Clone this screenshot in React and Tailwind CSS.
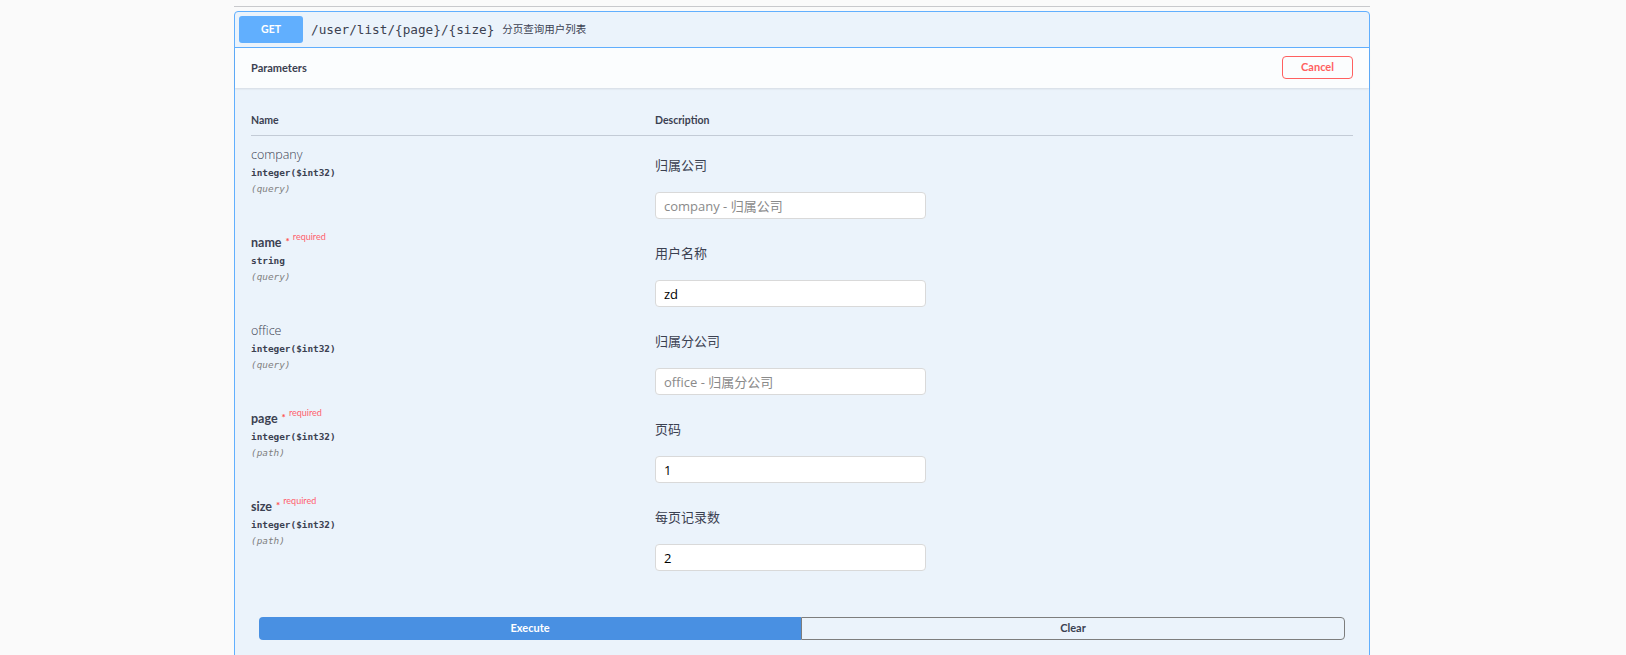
const params = [
  { name: "company", type: "integer($int32)", loc: "(query)", desc: "归属公司", placeholder: "company - 归属公司", value: "" },
  { name: "name", required: true, type: "string", loc: "(query)", desc: "用户名称", placeholder: "name - 用户名称", value: "zd" },
  { name: "office", type: "integer($int32)", loc: "(query)", desc: "归属分公司", placeholder: "office - 归属分公司", value: "" },
  { name: "page", required: true, type: "integer($int32)", loc: "(path)", desc: "页码", placeholder: "page - 页码", value: "1" },
  { name: "size", required: true, type: "integer($int32)", loc: "(path)", desc: "每页记录数", placeholder: "size - 每页记录数", value: "2" },
];

const label = "font-['Lato','Open_Sans',sans-serif]";
const mono = "font-['DejaVu_Sans_Mono','Liberation_Mono',monospace]";
const cjk = "font-['Open_Sans','Noto_Sans_CJK_SC',sans-serif]";

function ParamRow({ p }) {
  return (
    <div className="flex h-[88px]">
      {/* name column */}
      <div className="w-[404px] shrink-0 pt-[11px]">
        {p.required ? (
          <div className={`${label} flex items-start leading-[16px] text-[12.5px] font-bold text-[#3b4151]`}>
            <span>{p.name}</span>
            <span className="ml-[4px] -mt-[2px] text-[10px] text-[#ff4f4f]">*</span>
            <span className="ml-[3px] -mt-[6px] text-[9px] font-normal text-[#ff5f6d]">required</span>
          </div>
        ) : (
          <div className={`${cjk} leading-[16px] text-[12.5px] font-light text-[#3b4151]`}>{p.name}</div>
        )}
        <div className={`${mono} mt-[2px] leading-[16px] text-[9.4px] font-bold text-[#3b4151]`}>{p.type}</div>
        <div className={`${mono} leading-[16px] text-[9.4px] italic text-[#808080]`}>{p.loc}</div>
      </div>
      {/* description column */}
      <div className="flex-1 pt-[21px]">
        <div className={`${cjk} leading-[16px] text-[13px] text-[#3b4151]`}>{p.desc}</div>
        <input
          className={`${cjk} mt-[19px] block h-[27px] w-[271px] rounded-[4px] border border-[#d9d9d9] bg-white px-[8px] text-[13px] text-black outline-none placeholder:text-[#8a8a8a]`}
          placeholder={p.placeholder}
          defaultValue={p.value}
        />
      </div>
    </div>
  );
}

export default function App() {
  return (
    <div className="h-[655px] w-[1626px] overflow-hidden bg-[#fafafa] pt-[6px]">
      <div className="ml-[234px] w-[1136px]">
        <div className="h-px bg-[#c8c9cc]" />

        <div className="mt-[4px] h-[700px] rounded-[4px] border border-[#61affe] bg-[#ebf3fb]">
          {/* summary */}
          <div className="flex h-[36px] items-center border-b border-[#61affe] p-[4px]">
            <div className={`${label} flex h-[27px] w-[64px] items-center justify-center rounded-[3px] bg-[#61affe] text-[10.5px] font-bold text-white`}>
              GET
            </div>
            <span className={`${mono} ml-[8px] text-[12.7px] text-[#3b4151]`}>/user/list/{"{page}"}/{"{size}"}</span>
            <span className={`${cjk} ml-[8px] text-[10.5px] text-[#3b4151]`}>分页查询用户列表</span>
          </div>

          {/* parameters bar */}
          <div className="flex h-[40px] items-center justify-between bg-white/80 px-[16px] shadow-[0_1px_2px_rgba(0,0,0,0.1)]">
            <span className={`${label} text-[11px] font-bold text-[#3b4151]`}>Parameters</span>
            <button className={`${label} -mt-[2px] h-[23px] w-[71px] rounded-[4px] border border-[#ff6060] bg-transparent text-[11px] font-bold text-[#ff6060]`}>
              Cancel
            </button>
          </div>

          {/* table */}
          <div className="px-[16px]">
            <div className={`${label} flex border-b border-[#c3cbd6] pt-[25px] pb-[8px] leading-[14px] text-[10.5px] font-bold text-[#3b4151]`}>
              <div className="w-[404px] shrink-0">Name</div>
              <div>Description</div>
            </div>
            {params.map((p) => (
              <ParamRow key={p.name} p={p} />
            ))}
          </div>

          {/* actions */}
          <div className="mt-[41px] flex px-[24px]">
            <button className={`${label} h-[23px] flex-1 rounded-l-[4px] bg-[#4990e2] text-[11px] font-bold text-white`}>Execute</button>
            <button className={`${label} h-[23px] flex-1 rounded-r-[4px] border border-[#7d7d7d] bg-transparent text-[11px] font-bold text-[#3b4151]`}>Clear</button>
          </div>
        </div>
      </div>
    </div>
  );
}
